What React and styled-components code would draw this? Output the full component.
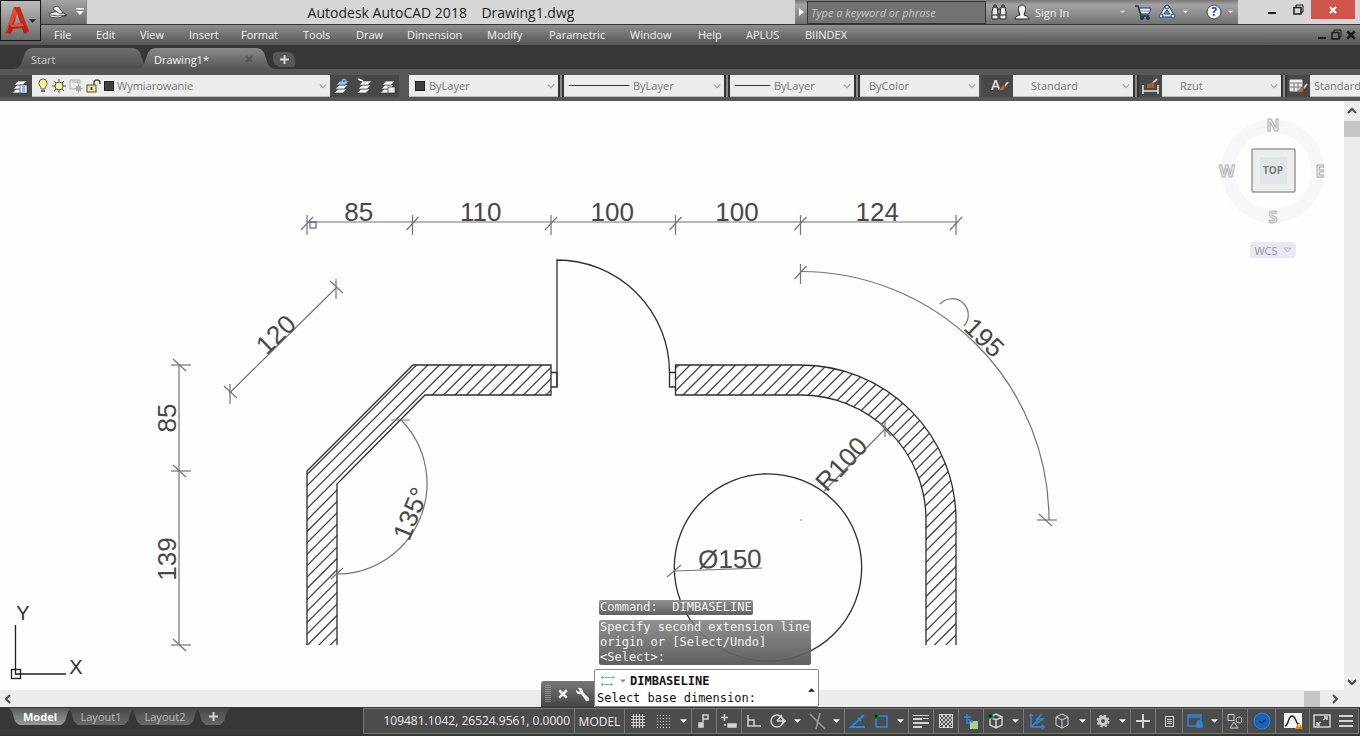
import React from "react";
import styled, { createGlobalStyle, css } from "styled-components";

const colors = {
  dark: "#373737",
  strip: "#575757",
  button: "#4c4c4c",
  light: "#d6d6d6",
  field: "#ececec",
  paper: "#fdfdfd",
  blue: "#2f86dc",
  icon: "#d2d2d2"
};

const GlobalStyle = createGlobalStyle`
  * {
    box-sizing: border-box;
  }

  body {
    margin: 0;
    overflow: hidden;
    font-family: "Open Sans", "Noto Sans", sans-serif;
    font-size: 11px;
  }

  button,
  input,
  select {
    font: inherit;
    color: inherit;
    margin: 0;
    padding: 0;
    border: 0;
    background: none;
  }

  svg {
    display: block;
    flex: none;
  }
`;

const Window = styled.div`
  display: flex;
  flex-direction: column;
  height: 100vh;
  background: ${colors.dark};
`;

/* ---------- header ---------- */

const Header = styled.header`
  display: grid;
  grid-template-columns: 41px 1fr;
  grid-template-rows: 25px 20px;
  background: linear-gradient(#9b9b9b, #9b9b9b 55%, #8e8e8e 56%, #545454);
`;

const AppButton = styled.button`
  grid-row: 1 / 3;
  display: flex;
  align-items: center;
  height: 41px;
  padding-left: 4px;
  border: 1px solid #161616;
  background: linear-gradient(#bdbdbd, #6a6a6a);
`;

const TitleBar = styled.div`
  display: flex;
  align-items: stretch;
  background: ${colors.light};
  border-bottom: 1px solid #333;
`;

const QuickAccess = styled.div`
  display: flex;
  align-items: center;
  gap: 8px;
  width: 46px;
  padding-left: 8px;
  background: linear-gradient(#a5a5a5, #6b6b6b);
  border-right: 1px solid #888;
`;

const IconButton = styled.button`
  display: flex;
  align-items: center;
  justify-content: center;
  flex: none;
`;

const Title = styled.h1`
  flex: 1;
  margin: 0;
  font-size: 14px;
  font-weight: 400;
  line-height: 25px;
  text-align: center;
  white-space: pre;
  color: #1b1b1b;
`;

const InfoCenter = styled.div`
  display: flex;
  align-items: center;
  width: 443px;
  color: #f2f2f2;
  background: linear-gradient(#777, #a4a4a4 20%, #717171);
`;

const SearchInput = styled.input`
  width: 179px;
  height: 23px;
  padding-left: 3px;
  border: 1px solid #333;
  background: #727272;
  font-style: italic;

  &::placeholder {
    color: #c6c6c6;
    opacity: 1;
  }
`;

const InfoButton = styled(IconButton)`
  width: ${props => props.$width}px;
  height: 24px;
`;

const SignIn = styled.button`
  width: 80px;
  padding-left: 2px;
  text-align: left;
`;

const WindowControls = styled.div`
  display: flex;
  align-items: flex-start;
  width: 122px;
  padding-left: 21px;
`;

const WindowButton = styled(IconButton)`
  width: 26px;
  height: 19px;
`;

const CloseButton = styled(IconButton)`
  width: 44px;
  height: 19px;
  background: #d0554b;
`;

const MenuBar = styled.nav`
  display: flex;
  align-items: flex-start;
  padding-left: 13px;
  color: #f2f2f2;
`;

const MenuButton = styled.button`
  width: ${props => props.$width}px;
  height: 18px;
  text-align: left;
`;

const MenuSpace = styled.div`
  flex: 1;
`;

const DocumentControls = styled.div`
  display: flex;
  gap: 4px;
  padding: 4px 4px 0 0;
`;

/* ---------- document tabs ---------- */

const FileTabs = styled.div`
  display: flex;
  align-items: flex-end;
  height: 25px;
  padding-left: 14px;
  background: ${colors.dark};
  border-bottom: 1px solid ${colors.strip};
`;

const FileTab = styled.div`
  display: flex;
  align-items: center;
  height: 21px;
  width: ${props => props.$width}px;
  margin-right: -14px;
  padding: 1px 22px 0 17px;
  color: #c9c9c9;
  background: linear-gradient(#6e6e6e, #4f4f4f);
  clip-path: polygon(
    0 100%, 4px 94%, 7px 78%, 11px 22%, 14px 6%, 18px 0,
    calc(100% - 18px) 0, calc(100% - 14px) 6%, calc(100% - 11px) 22%,
    calc(100% - 7px) 78%, calc(100% - 4px) 94%, 100% 100%
  );

  ${props =>
    props.$active &&
    css`
      z-index: 1;
      color: #f4f4f4;
      background: linear-gradient(#8a8a8a, ${colors.strip});
    `}

  button:first-child {
    flex: 1;
    text-align: left;
  }
`;

const NewTab = styled(IconButton)`
  width: 22px;
  height: 15px;
  margin: 0 0 2px 12px;
  border-radius: 3px 8px 3px 8px;
  background: #575757;
`;

/* ---------- properties toolbar ---------- */

const Toolbar = styled.div`
  display: flex;
  align-items: center;
  height: 31px;
  padding-top: 1px;
  overflow: hidden;
  flex: none;
  background: ${colors.strip};
`;

const ToolGroup = styled.div`
  display: flex;
  align-items: center;
  justify-content: space-around;
  flex: none;
  width: ${props => props.$width}px;
  height: 22px;
  padding-left: ${props => props.$pad || 0}px;
  background: #484848;
`;

const Grip = styled.div`
  flex: none;
  width: 6px;
  height: 22px;
  border-left: 2px solid #333;
  border-right: 2px solid #333;
  background: #888;
`;

const Spacer = styled.div`
  flex: none;
  width: ${props => props.$width}px;
`;

const Combo = styled.label`
  display: flex;
  align-items: center;
  flex: none;
  gap: ${props => props.$gap || 4}px;
  width: ${props => props.$width}px;
  height: 22px;
  padding: 0 3px 0 ${props => props.$pad || 5}px;
  color: #777;
  background: ${colors.field};
  border-bottom: 1px solid #bbb;

  select {
    flex: 1;
    min-width: 0;
    appearance: none;
    outline: 0;
  }
`;

const Swatch = styled.span`
  flex: none;
  width: 10px;
  height: 10px;
  background: #3f3f3f;
  border: 1px solid #222;
`;

const LineSample = styled.span`
  flex: none;
  width: ${props => props.$width}px;
  height: 1px;
  background: #333;
`;

/* ---------- drawing area ---------- */

const Workspace = styled.main`
  position: relative;
  display: grid;
  grid-template-columns: 1fr 16px;
  grid-template-rows: 1fr 17px;
  flex: 1;
  min-height: 0;
  background: ${colors.field};
`;

const Canvas = styled.div`
  position: relative;
  min-height: 0;
  overflow: hidden;
  background: ${colors.paper};
`;

const Drawing = styled.svg`
  width: 100%;
  height: 100%;
  font-family: "Liberation Sans", Arial, sans-serif;
  font-size: 26px;
`;

const VerticalScroll = styled.div`
  display: flex;
  flex-direction: column;
  justify-content: space-between;
  align-items: center;
  padding: 5px 0 3px;
`;

const HorizontalScroll = styled.div`
  grid-column: 1 / 3;
  display: flex;
  align-items: center;
  padding: 0 20px 0 3px;
`;

const ScrollStart = styled.div`
  display: grid;
  justify-items: center;
  gap: 5px;
  width: 100%;
`;

const Thumb = styled.div`
  width: 16px;
  height: 16px;
  background: #c6c6c6;
`;

const ScrollEnd = styled.div`
  display: flex;
  align-items: center;
  gap: 10px;
  margin-left: auto;
`;

const ViewCube = styled.div`
  position: absolute;
  top: 13px;
  right: 15px;
  display: flex;
  flex-direction: column;
  align-items: center;
  gap: 8px;
`;

const WcsButton = styled(IconButton)`
  gap: 5px;
  width: 46px;
  height: 16px;
  border-radius: 4px;
  color: #959595;
  background: #e6e8f2;
`;

/* ---------- command line ---------- */

const CommandPanel = styled.section`
  position: absolute;
  bottom: 0;
  left: 50%;
  transform: translateX(-50%);
  display: grid;
  grid-template-columns: 53px 225px;
  align-items: end;
  font-family: "DejaVu Sans Mono", monospace;
  font-size: 12px;
  line-height: 15px;
`;

const History = styled.div`
  grid-column: 1 / 3;
  display: flex;
  flex-direction: column;
  align-items: flex-start;
  gap: 5px;
  margin: 0 0 4px 58px;
  color: #f6f6f6;
`;

const HistoryLine = styled.div`
  padding: 0 1px;
  white-space: pre;
  border-radius: 2px;
  background: linear-gradient(rgba(130, 130, 130, 0.88), rgba(88, 88, 88, 0.95));
`;

const CommandTools = styled.div`
  display: flex;
  align-items: center;
  justify-content: space-around;
  height: 26px;
  border-radius: 3px 0 0 0;
  background: linear-gradient(#777, #444);
`;

const CommandBox = styled.div`
  display: grid;
  grid-template-columns: minmax(0, 1fr) 14px;
  align-items: center;
  height: 38px;
  padding: 2px 0 0 2px;
  color: #111;
  background: #fff;
  border: 1px solid #888;
  border-radius: 2px;
`;

const CommandName = styled.div`
  display: flex;
  align-items: center;
  gap: 4px;
  padding-left: 3px;
  line-height: 18px;
`;

const CommandText = styled.label`
  display: flex;
  line-height: 17px;
  white-space: nowrap;

  input {
    flex: 1;
    width: 0;
    min-width: 0;
    outline: 0;
  }
`;

/* ---------- status bar ---------- */

const StatusBar = styled.footer`
  display: flex;
  flex: none;
  height: 29px;
  padding: 1px 1px 1px 9px;
  background: ${colors.dark};
  border-bottom: 1px solid #23401f;
`;

const LayoutTab = styled.button`
  display: flex;
  align-items: center;
  justify-content: center;
  width: ${props => props.$width}px;
  height: 17px;
  margin-right: -3px;
  color: ${props => (props.$active ? "#fff" : "#b9b9b9")};
  font-weight: ${props => (props.$active ? 700 : 400)};
  background: ${props =>
    props.$active
      ? "linear-gradient(#5c5c5c, #9a9a9a)"
      : "linear-gradient(#484848, #686868)"};
  clip-path: polygon(
    0 0, 100% 0, calc(100% - 3px) 20%, calc(100% - 6px) 80%,
    calc(100% - 10px) 100%, 10px 100%, 6px 80%, 3px 20%
  );
`;

const StatusTray = styled.div`
  display: flex;
  margin-left: auto;
  height: 26px;
  background: ${colors.button};
  border: 1px solid #777;
`;

const Coordinates = styled.div`
  width: 210px;
  padding-right: 4px;
  text-align: right;
  font-size: 12px;
  line-height: 23px;
  color: #eee;
`;

const StatusCell = styled.div`
  display: flex;
  border-left: 1px solid #777;
`;

const StatusButton = styled(IconButton)`
  width: ${props => props.$width || 24}px;
  color: #eee;
  font-size: 12px;
`;

/* ---------- small glyphs ---------- */

const Caret = ({ color = "#f2f2f2", up, size = 7 }) => (
  <svg width={size} height="4" viewBox="0 0 8 4" fill={color}>
    <path d={up ? "M0 4L4 0L8 4Z" : "M0 0H8L4 4Z"} />
  </svg>
);

const arrows = {
  up: "M1 7L5 3L9 7",
  down: "M1 3L5 7L9 3",
  left: "M7 1L3 5L7 9",
  right: "M3 1L7 5L3 9"
};

const Chevron = ({ to = "down", color = "#4a4a4a", width = 2, size = 10 }) => (
  <svg
    width={size}
    height={size}
    viewBox="0 0 10 10"
    fill="none"
    stroke={color}
    strokeWidth={width}
  >
    <path d={arrows[to]} />
  </svg>
);

const Plus = ({ size = 9, color = "#d5d5d5" }) => (
  <svg width={size} height={size} viewBox="0 0 9 9" stroke={color} strokeWidth="2">
    <path d="M4.500 0V9M0 4.500H9" />
  </svg>
);

const Cross = ({ color = "#fff", size = 8, width = 2 }) => (
  <svg width={size} height={size} viewBox="0 0 8 8" stroke={color} strokeWidth={width}>
    <path d="M1 1L7 7M7 1L1 7" />
  </svg>
);

const Logo = () => (
  <svg width="24" height="30" viewBox="0 0 24 30">
    <path d="M9 1H15L24 25L19 28L12 7L7 26L0 28Z" fill="#c5281c" />
    <path d="M9 1L12 7L5 22L0 28Z" fill="#e0483a" />
    <path d="M4 19L18 17L24 25L20 28L17 22L8 23L5 28L2 27Z" fill="#b32218" />
    <path d="M5 19L17 17L19 20L7 21Z" fill="#e2564a" />
  </svg>
);

const Workspaces = () => (
  <svg width="19" height="14" viewBox="0 0 19 14" stroke="#333" strokeWidth="0.800">
    <path d="M1 8L10 6L18 10L9 13L1 12Z" fill="#f3f3f3" />
    <path d="M5 2L9 1L14 8L11 9L4 4Z" fill="#eee" />
    <path d="M2 10L9 11L17 10" fill="none" />
  </svg>
);

const Binoculars = () => (
  <svg width="16" height="17" viewBox="0 0 16 17" fill="#e9e9e9" stroke="#222">
    <path d="M2 3H6L7 8V15H1V8ZM10 3H14L15 8V15H9V8Z" />
    <path d="M7 5H9V10H7ZM1 11H7M9 11H15" />
    <path d="M3 1H5V3H3ZM11 1H13V3H11Z" />
  </svg>
);

const Person = () => (
  <svg width="16" height="17" viewBox="0 0 16 17" fill="#f5f5f5" stroke="#222">
    <path d="M8 1C12 1 12 5 11 8L10 11C12 12 15 12 15 15H1C1 12 4 12 6 11L5 8C4 5 4 1 8 1Z" />
  </svg>
);

const Cart = () => (
  <svg width="17" height="16" viewBox="0 0 17 16" fill="none" stroke="#26364f">
    <path d="M4 4H16L14 10H6Z" fill="#dfe8f5" />
    <path d="M0 2H3L6 12H14" strokeWidth="1.500" />
    <path d="M5 7H15" stroke="#8598b5" />
    <circle cx="7" cy="14" r="1.500" fill="#26364f" />
    <circle cx="13" cy="14" r="1.500" fill="#26364f" />
  </svg>
);

const Triangle360 = () => (
  <svg width="18" height="16" viewBox="0 0 18 16" fill="#d4e0f3" stroke="#29405f">
    <path d="M7 2H11L16 11L14 13H4L2 11ZM9 6L6 10H12Z" fillRule="evenodd" />
    <circle cx="9" cy="3" r="2" />
    <circle cx="3" cy="12" r="2" />
    <circle cx="15" cy="12" r="2" />
  </svg>
);

const Help = () => (
  <svg width="16" height="16" viewBox="0 0 16 16">
    <circle cx="8" cy="8" r="7" fill="#f5f8fd" stroke="#39424f" />
    <text x="8" y="12" textAnchor="middle" fontSize="12" fontWeight="700" fill="#1f4ea3">
      ?
    </text>
  </svg>
);

const Restore = () => (
  <svg width="11" height="11" viewBox="0 0 11 11" fill="none" stroke="#1b1b1b">
    <path d="M3 3V1H10V8H8" />
    <path d="M1 3.500H8V10H1Z" strokeWidth="1.500" />
  </svg>
);

const Minimize = () => (
  <svg width="10" height="11" viewBox="0 0 10 11" fill="#1b1b1b">
    <rect x="1" y="8" width="8" height="2" />
  </svg>
);

const Layers = ({ tint = "#f2f2f2", extra }) => (
  <svg width="16" height="16" viewBox="0 0 16 16" stroke="#3a3a3a" strokeWidth="0.600">
    <path d="M0 15L4 11H13L9 15Z" fill="#f2f2f2" />
    <path d="M1 11L5 7H14L10 11Z" fill="#f2f2f2" />
    <path d="M2 7L6 3H15L11 7Z" fill={tint} />
    {extra}
  </svg>
);

const LayerManager = () => (
  <Layers
    extra={
      <g stroke="#335">
        <rect x="8" y="7" width="7" height="8" fill="#e8f0fa" />
        <path d="M10 9H13M10 11H13M10 13H13" stroke="#2f7bc8" strokeWidth="1" />
      </g>
    }
  />
);

const LayerStates = () => (
  <Layers
    extra={<rect x="8" y="9" width="7" height="6" fill="#ececec" stroke="#222" />}
  />
);

const Bulb = () => (
  <svg width="12" height="16" viewBox="0 0 12 16">
    <path
      d="M6 1A4 4 0 0 1 10 5C10 8 8 8 8 11H4C4 8 2 8 2 5A4 4 0 0 1 6 1Z"
      fill="#fbf0a0"
      stroke="#6c6338"
    />
    <path d="M4 12H8V14H4Z" fill="#666" />
  </svg>
);

const Sun = () => (
  <svg width="14" height="14" viewBox="0 0 14 14" stroke="#5a5233">
    <path d="M7 0V14M0 7H14M2 2L12 12M12 2L2 12" />
    <circle cx="7" cy="7" r="4" fill="#fbf0a0" />
  </svg>
);

const ViewportFreeze = () => (
  <svg width="14" height="14" viewBox="0 0 14 14" fill="none" stroke="#a9a9a9">
    <path d="M6 10H1V1H11V5M3 3H9V5" />
    <circle cx="9.500" cy="9.500" r="2.500" />
    <path d="M9.500 5.500V13.500M5.500 9.500H13.500M7 7L12 12M12 7L7 12" />
  </svg>
);

const Unlock = () => (
  <svg width="15" height="14" viewBox="0 0 15 14" fill="none" stroke="#575037">
    <path d="M8 7V4A3 3 0 0 1 14 4V5" strokeWidth="1.500" />
    <rect x="1" y="6" width="9" height="7" fill="#f3e7a0" />
    <path d="M5.500 8V11" strokeWidth="2" />
  </svg>
);

const Brush = () => (
  <g>
    <path d="M18 6L14 11" stroke="#c9c9c9" strokeWidth="2" />
    <path d="M15 10L13 9L8 15L14 14Z" fill="#b5713a" stroke="#5c3516" strokeWidth="0.600" />
  </g>
);

const TextStyleIcon = () => (
  <svg width="19" height="20" viewBox="0 0 19 20">
    <text x="1" y="14" fontSize="14" fontWeight="600" fill="#e4e4e4">
      A
    </text>
    <Brush />
  </svg>
);

const DimStyleIcon = () => (
  <svg width="19" height="17" viewBox="0 0 19 17">
    <path d="M2 7V16M17 7V16M2 13H17" stroke="#e4e4e4" strokeWidth="1.500" />
    <path d="M16 1L11 6" stroke="#c9c9c9" strokeWidth="2" />
    <path d="M14 4L6 6V10H13Z" fill="#a5602c" />
  </svg>
);

const TableStyleIcon = () => (
  <svg width="19" height="17" viewBox="0 0 19 17">
    <path d="M1 2H13V13H1Z" fill="#f0f0f0" stroke="#ddd" />
    <path d="M1 5H13M1 9H13M5 5V13M9 5V13" stroke="#777" />
    <Brush />
  </svg>
);

const Wrench = () => (
  <svg width="15" height="15" viewBox="0 0 15 15">
    <path
      d="M1 3L4 5L5 4L3 1C6 0 8 2 8 5L14 11C15 13 13 15 11 14L6 7C3 8 1 6 1 3Z"
      fill="#eee"
    />
  </svg>
);

const BaselineIcon = () => (
  <svg width="16" height="12" viewBox="0 0 16 12" fill="none" stroke="#7fb0c4">
    <path d="M1 2.500H14M12.500 1L14.500 2.500L12.500 4M3 1L1 2.500L3 4" />
    <path d="M1 9.500H12M10.500 8L12.500 9.500L10.500 11M3 8L1 9.500L3 11" />
  </svg>
);

/* ---------- status icons ---------- */

const grey = { fill: "none", stroke: colors.icon, strokeWidth: 1.5 };
const blue = { fill: "none", stroke: colors.blue, strokeWidth: 1.5 };

const cube = "M8 1L14 4V12L8 15L2 12V4ZM2 4L8 7L14 4M8 7V15";

const statusIcons = {
  grid: (
    <path
      {...grey}
      strokeWidth="1"
      d="M3.500 1V15M6.500 1V15M9.500 1V15M12.500 1V15M1 3.500H15M1 6.500H15M1 9.500H15M1 12.500H15"
    />
  ),
  snap: (
    <path
      {...grey}
      strokeWidth="1"
      strokeDasharray="1 2"
      d="M1 2.500H15M1 5.500H15M1 8.500H15M1 11.500H15M1 14.500H15"
    />
  ),
  infer: (
    <g {...grey}>
      <path d="M7 9V2H12V6H7" />
      <rect x="3" y="10" width="4" height="4" fill={colors.icon} />
    </g>
  ),
  dynamic: (
    <g {...grey}>
      <path d="M0 4.500H7M3.500 1V8" />
      <rect x="7" y="11" width="8" height="3" fill={colors.icon} />
      <path d="M3 12H5" />
    </g>
  ),
  ortho: <path {...grey} d="M2 2V13H15M2 7H8V13" />,
  polar: (
    <g {...grey}>
      <circle cx="7" cy="8" r="6" />
      <path d="M7 8H16M7 8L12 2M12 5L15 8L12 11" />
    </g>
  ),
  iso: <path {...grey} stroke="#999" d="M1 1L16 16M11 0L7 16" />,
  track: <path {...blue} strokeWidth="2" d="M15 2L2 14H16M9 5L12 8" />,
  osnap: (
    <g {...blue}>
      <path d="M3 3H14V14H3Z" />
      <rect x="1" y="1" width="4" height="4" fill="#111" stroke="#1e6b36" />
    </g>
  ),
  weight: (
    <g fill={colors.icon}>
      <path d="M0 2H16V3H0ZM0 5H9V7H0ZM0 9H16V11H0ZM0 13H9V15H0Z" />
      <path d="M10 5H16V6H10Z" />
    </g>
  ),
  transparency: (
    <g {...grey} strokeWidth="1">
      <rect x="1.500" y="1.500" width="13" height="13" />
      <path d="M2 5L5 2M2 9L9 2M2 13L13 2M5 14L14 5M9 14L14 9M11 2L14 5M7 2L14 9M3 2L14 13M2 5L11 14M2 9L7 14" />
    </g>
  ),
  cycling: (
    <g>
      <path {...blue} d="M1 4H8M4 1V8M4 4V10H8" />
      <rect x="7" y="8" width="8" height="8" fill="#a9cf94" />
      <path {...blue} d="M5 6L10 9" />
    </g>
  ),
  osnap3d: (
    <g {...grey}>
      <path d={cube} />
      <rect x="0" y="1" width="4" height="4" fill="#111" stroke="#1e6b36" />
    </g>
  ),
  ucs: <path {...blue} d="M2 1V14H15M2 14L9 7M13 1L8 6H14L7 11M0 3L2 1L4 3M13 12L15 14L13 16" />,
  cube: <path {...grey} strokeWidth="1" d={cube} />,
  gear: (
    <g>
      <circle cx="8" cy="8" r="3.500" fill="none" stroke="#c9c9c9" strokeWidth="3" />
      <circle
        cx="8"
        cy="8"
        r="5.500"
        fill="none"
        stroke="#c9c9c9"
        strokeWidth="2"
        strokeDasharray="2.400 1.920"
      />
    </g>
  ),
  plus: <path {...grey} strokeWidth="2" d="M8 1V15M1 8H15" />,
  list: (
    <g {...grey} strokeWidth="1">
      <rect x="4.500" y="3.500" width="8" height="10" />
      <path d="M6 6.500H11M6 8.500H11M6 10.500H11" />
    </g>
  ),
  lock: (
    <g {...blue}>
      <path d="M9 13H1V2H14V7M1 4H14" />
      <rect x="10" y="10" width="5" height="4" fill={colors.blue} />
      <path d="M11 10V8H14V10" />
    </g>
  ),
  shapes: (
    <g {...grey} strokeWidth="1">
      <path d="M1 1.500H7V7.500H1ZM7 9L11 15H3Z" />
      <circle cx="12" cy="7" r="3" />
    </g>
  ),
  performance: (
    <g>
      <circle cx="8" cy="8" r="8" fill="#1c63b5" stroke="#2f86dc" />
      <path d="M5 8L8 10L12 6" fill="none" stroke="#123a6c" strokeWidth="1.500" />
    </g>
  ),
  monitor: (
    <g>
      <rect x="-1" y="0" width="18" height="15" fill="#f4f4f4" />
      <path d="M0 13C4 12 3 3 7 3S11 12 15 13" fill="none" stroke="#222" strokeWidth="1.500" />
      <path d="M14 9L18 16H10Z" fill="#e07b1c" />
      <path d="M14 11V14" stroke="#fff" />
    </g>
  ),
  fullscreen: (
    <g {...grey}>
      <rect x="0" y="2" width="16" height="12" />
      <path d="M9 7L12 5M10 4H13V7M7 9L4 11M3 9V12H6" />
    </g>
  ),
  menu: <path {...grey} strokeWidth="2" d="M1 3H15M1 8H15M1 13H15" />
};

const statusCells = [
  ["grid", "snap", "v"],
  ["infer"],
  ["dynamic"],
  ["ortho", "polar", "v", "iso", "v"],
  ["track", "osnap", "v"],
  ["weight"],
  ["transparency"],
  ["cycling"],
  ["osnap3d", "v"],
  ["ucs", "cube", "v"],
  ["gear", "v"],
  ["plus"],
  ["list"],
  ["lock", "v"],
  ["shapes"],
  ["performance"],
  ["monitor"],
  ["fullscreen", "menu"]
];

const wideIcons = {
  grid: 26,
  snap: 25,
  ucs: 25,
  cube: 26,
  list: 26,
  performance: 27,
  monitor: 33
};

/* ---------- drawing ---------- */

const dimColor = "#757575";

const Tick = ({ x, y, axis = "v", lean = "/" }) => (
  <g stroke={dimColor} strokeWidth="1.200">
    <path
      d={axis === "v" ? `M${x} ${y - 8}V${y + 12}` : `M${x - 8} ${y}H${x + 12}`}
    />
    <path
      d={
        lean === "/"
          ? `M${x - 6} ${y + 7}L${x + 6} ${y - 6}`
          : `M${x - 6} ${y - 6}L${x + 7} ${y + 6}`
      }
    />
  </g>
);

const DimText = ({ x, y, angle = 0, children }) => (
  <text
    transform={`translate(${x} ${y}) rotate(${angle})`}
    textAnchor="middle"
    fill="#484848"
  >
    {children}
  </text>
);

const leftWall = "M307 645V471L413 365H551V395H425L337 484V645";
const rightWall = "M956 645V520A155 155 0 0 0 801 365H675.500V395H801A125 125 0 0 1 926 520V645";

const hatchLines = Array.from({ length: 76 }, (_, i) => {
  const sum = 781.5 + i * 11.4;
  return `M${sum - 360} 360L${sum - 650} 650`;
}).join("");

const topStops = [307, 412.5, 551, 675.5, 800.5, 956];
const topLabels = [85, 110, 100, 100, 124];

const FloorPlan = () => (
  <Drawing viewBox="0 101 1344 589" preserveAspectRatio="xMidYMid meet" fill="none">
    <defs>
      <clipPath id="walls">
        <path d={`${leftWall}Z`} />
        <path d={`${rightWall}Z`} />
      </clipPath>
    </defs>

    <path d={hatchLines} clipPath="url(#walls)" stroke="#444" strokeWidth="1.300" />
    <g stroke="#2e2e2e" strokeWidth="1.300">
      <path d={leftWall} />
      <path d={rightWall} />
      <path d="M551 372.500H557V387H551M675.500 372.500H669.500V387H675.500" />
      <path d="M557 387V260A112.500 112.500 0 0 1 669.500 372.500" />
      <circle cx="768" cy="567.500" r="93.700" />
    </g>

    <g stroke={dimColor} strokeWidth="1.200">
      <path d="M307 222H956M179 365V645M229.500 393L336 288" />
      <path d="M401 420A90.500 90.500 0 0 1 337 574" />
      <path d="M800.500 271.500A248.500 248.500 0 0 1 1049 520" />
      <path d="M940 304A16 16 0 0 1 964 326" />
      <path d="M674 571L762 568M885 429L824 491" />
      <path d="M391 420H410M331 579L343 568M667 577L681 565M885 420V437M879 422L891 436" />
    </g>

    {topStops.map(x => (
      <Tick key={x} x={x} y={223} />
    ))}
    {topLabels.map((label, i) => (
      <DimText key={i} x={(topStops[i] + topStops[i + 1]) / 2 - 1} y={221}>
        {label}
      </DimText>
    ))}
    <rect x="310" y="222" width="6" height="6" stroke="#3e36a8" />

    {[365, 471, 645].map(y => (
      <Tick key={y} x={179} y={y} axis="h" lean="\" />
    ))}
    <DimText x={176} y={418} angle={-90}>
      85
    </DimText>
    <DimText x={176} y={559} angle={-90}>
      139
    </DimText>

    <Tick x={230} y={392} lean="\" />
    <Tick x={336} y={287} lean="\" />
    <DimText x={282} y={341} angle={-44}>
      120
    </DimText>
    <DimText x={419} y={517} angle={-68}>
      135°
    </DimText>
    <DimText x={730} y={568} angle={-1}>
      Ø150
    </DimText>
    <DimText x={848} y={470} angle={-47}>
      R100
    </DimText>

    <Tick x={800.5} y={272} />
    <Tick x={1045} y={520} axis="h" lean="\" />
    <DimText x={978} y={344} angle={44}>
      195
    </DimText>
    <circle cx="801" cy="520" r="0.800" fill="#777" />

    <g stroke="#1f1f1f" strokeWidth="1.300">
      <path d="M15.500 625V674H66" />
      <rect x="11.500" y="669.500" width="9" height="9" />
    </g>
    <g fill="#333" fontSize="20" textAnchor="middle">
      <text x="23" y="620">
        Y
      </text>
      <text x="76" y="674">
        X
      </text>
    </g>
  </Drawing>
);

const Compass = () => (
  <svg width="112" height="120" viewBox="0 0 112 120">
    <circle cx="56" cy="57" r="45" fill="none" stroke="#f7f7f9" strokeWidth="13" />
    <g
      fill="#eee"
      stroke="#b2b2b2"
      strokeWidth="1"
      fontSize="16"
      fontWeight="700"
      textAnchor="middle"
    >
      <text x="56" y="17">
        N
      </text>
      <text x="10" y="63">
        W
      </text>
      <text x="103" y="63">
        E
      </text>
      <text x="56" y="109">
        S
      </text>
    </g>
    <rect x="35" y="35" width="43" height="43" rx="1" fill="#ededed" stroke="#999" strokeWidth="1.500" />
    <rect x="43" y="43" width="27" height="27" fill="#dfe6e8" />
    <text x="56" y="60" fontSize="10" fontWeight="700" textAnchor="middle" fill="#7c7c7c">
      TOP
    </text>
  </svg>
);

/* ---------- sections ---------- */

const menus = [
  ["File", 42],
  ["Edit", 44],
  ["View", 49],
  ["Insert", 52],
  ["Format", 62],
  ["Tools", 53],
  ["Draw", 51],
  ["Dimension", 80],
  ["Modify", 62],
  ["Parametric", 81],
  ["Window", 68],
  ["Help", 48],
  ["APLUS", 59],
  ["BIINDEX", 50]
];

const TopBar = () => (
  <Header>
    <AppButton aria-label="Application menu">
      <Logo />
      <Caret color="#222" />
    </AppButton>
    <TitleBar>
      <QuickAccess>
        <IconButton aria-label="Workspace">
          <Workspaces />
        </IconButton>
        <IconButton aria-label="Customize toolbar">
          <svg width="8" height="8" viewBox="0 0 8 8" fill="#f4f4f4">
            <path d="M0 0H8V1.500H0ZM0 3H8L4 7Z" />
          </svg>
        </IconButton>
      </QuickAccess>
      <Title>{"Autodesk AutoCAD 2018    Drawing1.dwg"}</Title>
      <InfoCenter>
        <InfoButton $width={12} aria-label="Collapse search">
          <svg width="5" height="8" viewBox="0 0 5 8" fill="#fff">
            <path d="M0 0L5 4L0 8Z" />
          </svg>
        </InfoButton>
        <SearchInput aria-label="Search" placeholder="Type a keyword or phrase" />
        <InfoButton $width={25} aria-label="Find">
          <Binoculars />
        </InfoButton>
        <InfoButton $width={22} aria-label="Account">
          <Person />
        </InfoButton>
        <SignIn>Sign In</SignIn>
        <InfoButton $width={18} aria-label="Account options">
          <Caret size={5} />
        </InfoButton>
        <InfoButton $width={24} aria-label="App store">
          <Cart />
        </InfoButton>
        <InfoButton $width={24} aria-label="Stay connected">
          <Triangle360 />
        </InfoButton>
        <InfoButton $width={12} aria-label="Connection options">
          <Caret size={5} />
        </InfoButton>
        <Spacer $width={14} />
        <InfoButton $width={18} aria-label="Help">
          <Help />
        </InfoButton>
        <InfoButton $width={14} aria-label="Help options">
          <Caret size={5} />
        </InfoButton>
      </InfoCenter>
      <WindowControls>
        <WindowButton aria-label="Minimize">
          <Minimize />
        </WindowButton>
        <WindowButton aria-label="Restore">
          <Restore />
        </WindowButton>
        <CloseButton aria-label="Close">
          <Cross />
        </CloseButton>
      </WindowControls>
    </TitleBar>
    <MenuBar>
      {menus.map(([label, width]) => (
        <MenuButton key={label} $width={width}>
          {label}
        </MenuButton>
      ))}
      <MenuSpace />
      <DocumentControls>
        <IconButton aria-label="Minimize drawing">
          <Minimize />
        </IconButton>
        <IconButton aria-label="Restore drawing">
          <Restore />
        </IconButton>
        <IconButton aria-label="Close drawing window">
          <Cross color="#1b1b1b" size={10} />
        </IconButton>
      </DocumentControls>
    </MenuBar>
  </Header>
);

const DocumentTabs = () => (
  <FileTabs>
    <FileTab $width={137}>
      <button>Start</button>
    </FileTab>
    <FileTab $width={138} $active>
      <button>Drawing1*</button>
      <IconButton aria-label="Close Drawing1">
        <Cross color="#555" />
      </IconButton>
    </FileTab>
    <NewTab aria-label="New drawing">
      <Plus />
    </NewTab>
  </FileTabs>
);

const PropertyCombo = ({ label, value, width, pad, gap, children }) => (
  <Combo $width={width} $pad={pad} $gap={gap}>
    {children}
    <select aria-label={label}>
      <option>{value}</option>
    </select>
    <Chevron color="#a5a5a5" width={1.5} size={8} />
  </Combo>
);

const PropertiesBar = () => (
  <Toolbar>
    <ToolGroup $width={32} $pad={8}>
      <IconButton aria-label="Layer properties">
        <LayerManager />
      </IconButton>
    </ToolGroup>
    <PropertyCombo label="Layer" value="Wymiarowanie" width={298} gap={3}>
      <Bulb />
      <Sun />
      <ViewportFreeze />
      <Unlock />
      <Swatch />
    </PropertyCombo>
    <ToolGroup $width={69}>
      <IconButton aria-label="Make current">
        <Layers
          tint="#9cc3ee"
          extra={<circle cx="10" cy="3" r="2" fill="#3f82d2" stroke="#cfe2f7" />}
        />
      </IconButton>
      <IconButton aria-label="Previous layer">
        <Layers extra={<path d="M1 1L6 3" stroke="#fff" strokeWidth="1.500" />} />
      </IconButton>
      <IconButton aria-label="Layer states">
        <LayerStates />
      </IconButton>
    </ToolGroup>
    <Spacer $width={10} />
    <PropertyCombo label="Color" value="ByLayer" width={149} pad={6}>
      <Swatch />
    </PropertyCombo>
    <Grip />
    <PropertyCombo label="Linetype" value="ByLayer" width={160}>
      <LineSample $width={60} />
    </PropertyCombo>
    <Grip />
    <PropertyCombo label="Lineweight" value="ByLayer" width={124}>
      <LineSample $width={35} />
    </PropertyCombo>
    <Grip />
    <PropertyCombo label="Plot style" value="ByColor" width={119} pad={9} />
    <Spacer $width={2} />
    <ToolGroup $width={32} $pad={4}>
      <IconButton aria-label="Text style manager">
        <TextStyleIcon />
      </IconButton>
    </ToolGroup>
    <PropertyCombo label="Text style" value="Standard" width={120} pad={18} />
    <Grip />
    <ToolGroup $width={23}>
      <IconButton aria-label="Dimension style manager">
        <DimStyleIcon />
      </IconButton>
    </ToolGroup>
    <PropertyCombo label="Dimension style" value="Rzut" width={119} pad={18} />
    <Grip />
    <ToolGroup $width={23}>
      <IconButton aria-label="Table style manager">
        <TableStyleIcon />
      </IconButton>
    </ToolGroup>
    <PropertyCombo label="Table style" value="Standard" width={120} pad={4} />
  </Toolbar>
);

const CommandLine = () => (
  <CommandPanel>
    <History>
      <HistoryLine>Command:  DIMBASELINE</HistoryLine>
      <HistoryLine>
        {"Specify second extension line\norigin or [Select/Undo]\n<Select>:"}
      </HistoryLine>
    </History>
    <CommandTools>
      <svg width="6" height="18" viewBox="0 0 6 18" stroke="#bbb" strokeDasharray="1 1">
        <path d="M1 0V18M3 0V18M5 0V18" />
      </svg>
      <IconButton aria-label="Close command line">
        <Cross color="#eee" size={10} />
      </IconButton>
      <IconButton aria-label="Customize">
        <Wrench />
      </IconButton>
    </CommandTools>
    <CommandBox>
      <div>
        <CommandName>
          <BaselineIcon />
          <Caret color="#888" size={6} />
          <b>DIMBASELINE</b>
        </CommandName>
        <CommandText>
          Select base dimension:
          <input />
        </CommandText>
      </div>
      <IconButton aria-label="Command history">
        <Caret color="#222" up />
      </IconButton>
    </CommandBox>
  </CommandPanel>
);

const Status = () => (
  <StatusBar>
    <LayoutTab $width={62} $active>
      Model
    </LayoutTab>
    <LayoutTab $width={66}>Layout1</LayoutTab>
    <LayoutTab $width={68}>Layout2</LayoutTab>
    <LayoutTab $width={34} aria-label="New layout">
      <Plus />
    </LayoutTab>
    <StatusTray>
      <Coordinates>109481.1042, 26524.9561, 0.0000</Coordinates>
      <StatusCell>
        <StatusButton $width={49}>MODEL</StatusButton>
      </StatusCell>
      {statusCells.map(cell => (
        <StatusCell key={cell[0]}>
          {cell.map((name, i) =>
            name === "v" ? (
              <StatusButton key={i} $width={15} aria-label={`${cell[i - 1]} options`}>
                <Caret />
              </StatusButton>
            ) : (
              <StatusButton key={i} $width={wideIcons[name]} aria-label={name}>
                <svg width="16" height="16" viewBox="0 0 16 16" overflow="visible">
                  {statusIcons[name]}
                </svg>
              </StatusButton>
            )
          )}
        </StatusCell>
      ))}
    </StatusTray>
  </StatusBar>
);

export default function App() {
  return (
    <Window>
      <GlobalStyle />
      <TopBar />
      <DocumentTabs />
      <PropertiesBar />
      <Workspace>
        <Canvas>
          <FloorPlan />
          <ViewCube>
            <Compass />
            <WcsButton>
              WCS
              <svg width="9" height="6" viewBox="0 0 9 6" fill="none" stroke="#b5b8c8">
                <path d="M1 1H8L4.500 5Z" />
              </svg>
            </WcsButton>
          </ViewCube>
        </Canvas>
        <VerticalScroll>
          <ScrollStart>
            <Chevron to="up" />
            <Thumb />
          </ScrollStart>
          <Chevron to="down" />
        </VerticalScroll>
        <HorizontalScroll>
          <Chevron to="left" />
          <ScrollEnd>
            <Thumb />
            <Chevron to="right" />
          </ScrollEnd>
        </HorizontalScroll>
        <CommandLine />
      </Workspace>
      <Status />
    </Window>
  );
}
